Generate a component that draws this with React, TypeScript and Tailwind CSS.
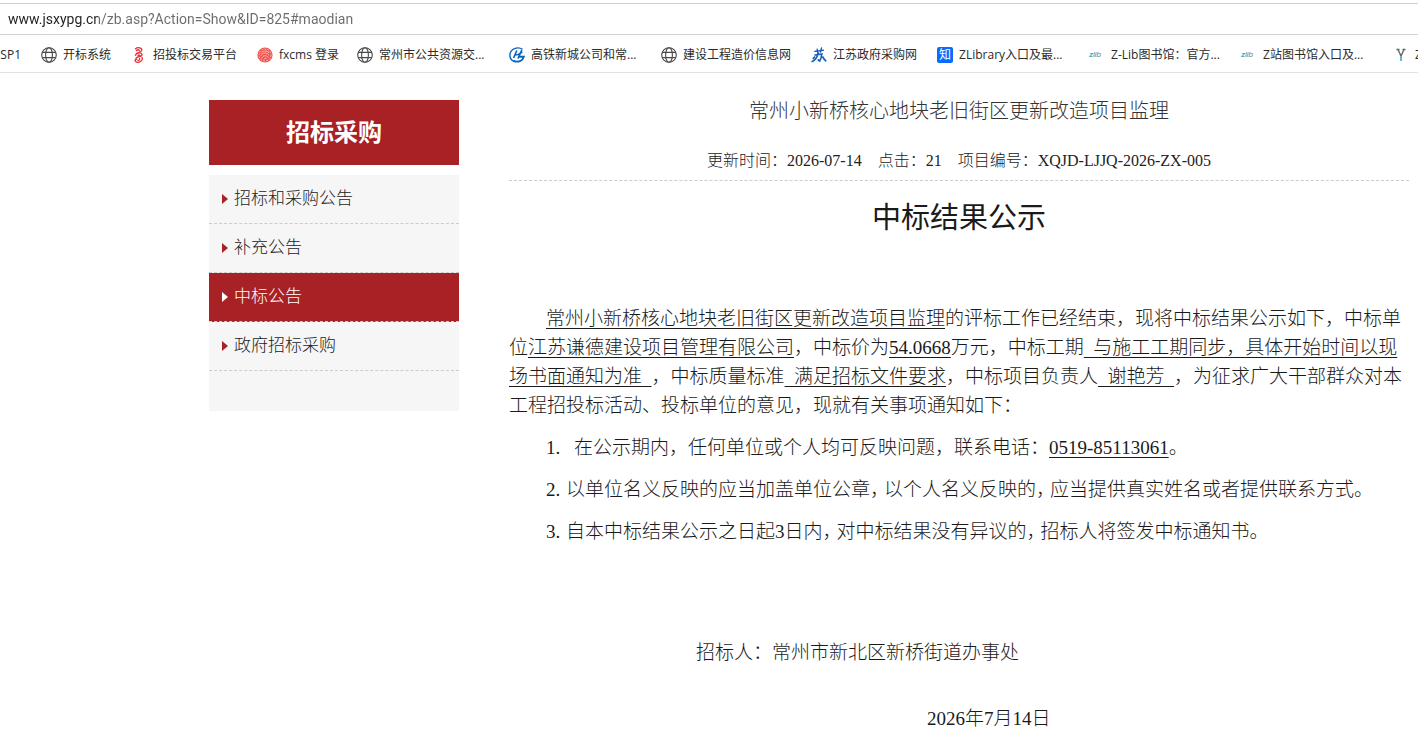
import type { ReactNode } from 'react';

type IconName = 'globe' | 'dragon' | 'seal' | 'rail' | 'su' | 'zhi' | 'zlib' | 'fork';

const bookmarks: { label: string; icon: IconName; width?: string }[] = [
  { label: '开标系统', icon: 'globe' },
  { label: '招投标交易平台', icon: 'dragon' },
  { label: 'fxcms 登录', icon: 'seal', width: 'w-20' },
  { label: '常州市公共资源交...', icon: 'globe', width: 'w-[132px]' },
  { label: '高铁新城公司和常...', icon: 'rail', width: 'w-[132px]' },
  { label: '建设工程造价信息网', icon: 'globe' },
  { label: '江苏政府采购网', icon: 'su' },
  { label: 'ZLibrary入口及最...', icon: 'zhi', width: 'w-[132px]' },
  { label: 'Z-Lib图书馆：官方...', icon: 'zlib', width: 'w-[132px]' },
  { label: 'Z站图书馆入口及...', icon: 'zlib', width: 'w-[132px]' },
  { label: 'Z-Library', icon: 'fork' },
];

const menu = [
  { label: '招标和采购公告' },
  { label: '补充公告' },
  { label: '中标公告', active: true },
  { label: '政府招标采购' },
];

function BookmarkIcon({ name }: { name: IconName }) {
  const svg = 'size-4 shrink-0';
  switch (name) {
    case 'globe':
      return (
        <svg className={svg} viewBox="0 0 16 16" fill="none" stroke="#4a4a4a" strokeWidth="1.1">
          <circle cx="8" cy="8" r="7.3" />
          <ellipse cx="8" cy="8" rx="3.4" ry="7.3" />
          <path d="M1.4 5.4h13.2M1.4 10.6h13.2" />
        </svg>
      );
    case 'dragon':
      return (
        <svg className={svg} viewBox="0 0 16 16" fill="none" stroke="#ee2a35" strokeWidth="1.3" strokeLinecap="round">
          <path d="M4.500 1.800C6.500 0 11 .5 10.800 3.200c-.2 2-3.500 1.800-5.300 3.300M5.500 3.800c.8-1.400 2.800-1.300 2.800-.2" />
          <path d="M4.300 8.300c1.500-2.800 6.500-3.300 6.700-.6.100 2.200-4.500 1.600-6 3.500M7 8.500c1-.8 2-.5 1.800.2" />
          <path d="M11 10.300c1.500 3.500-3.500 6.300-6.500 4.200-1-1.200 0-2.500 1.200-2.200M7 13.300c1.200.2 2-.8 1.600-1.700" />
        </svg>
      );
    case 'seal':
      return (
        <svg className={svg} viewBox="0 0 16 16" fill="none">
          <circle cx="8" cy="8" r="7.6" fill="#f0524d" />
          <g stroke="#fbd0cd" strokeWidth="0.8">
            <circle cx="8" cy="8" r="6" strokeDasharray="2 1" />
            <path d="M4 6.500c1.500-3 6-3.500 8-.5M3.800 9c1-3.500 6.500-4 8.400-.6M5 11.500c0-3 5-4 6.500-.8M7 12.300c.3-1.500 2.200-1.500 2.600 0" />
          </g>
        </svg>
      );
    case 'rail':
      return (
        <svg className={svg} viewBox="0 0 16 16" fill="none" stroke="#0f66bd">
          <path d="M13.500 2.300C8.500-1 1.200 2 .9 8c0 3.200 2 5.700 4.600 6.500" strokeWidth="1.4" />
          <path d="M4.500 14c5 1.600 9 .2 10.300-4.300H9.500" strokeWidth="1.900" />
          <path d="M7.800 3.500 4.600 11M12.800 3.200 9 11.500M5.800 8c2.500.2 4.500-.6 7.500-3.200" strokeWidth="1.700" />
        </svg>
      );
    case 'su':
      return (
        <svg className={svg} viewBox="0 0 16 16" fill="none" stroke="#1d62b8" strokeWidth="1.7" strokeLinecap="round">
          <path d="M3.800 4.400 12.500 3.200M6.200 2.300l.5 3M10.500 1l-1 4" strokeWidth="1.400" />
          <path d="M4 8 10.800 7c-.3 3-1 5.500-2.100 7l-1.500-1M7.300 6C6.300 10 4.500 13 1.200 14.600" />
          <path d="M3.600 10 2.300 11.300M11.800 10c.8 1.500 1.800 2.800 3 3.800" />
        </svg>
      );
    case 'zhi':
      return (
        <span className="flex size-4 shrink-0 items-center justify-center rounded-xs bg-[#0a6cff] text-[12px] leading-4 text-white">
          知
        </span>
      );
    case 'zlib':
      return (
        <span className="flex w-4 shrink-0 items-center font-['Liberation_Sans'] text-[8px] leading-4 text-[#777] italic">
          <span className="font-bold text-[#3aaed2]">z</span>lib
        </span>
      );
    default:
      return (
        <svg className={svg} viewBox="0 0 16 16" fill="none">
          <path d="M3.500 2.500h3M9.500 2.500h3M5 2.500l3 6.500 3-6.500" stroke="#666" strokeWidth="1.400" />
          <path d="M8 9.500V14" stroke="#4db3d3" strokeWidth="1.800" />
        </svg>
      );
  }
}

function U({ children }: { children: ReactNode }) {
  return <span className="underline decoration-1 underline-offset-3 [text-decoration-skip-ink:none]">{children}</span>;
}

// narrow full-width comma used in the numbered notes
function Comma() {
  return <span className="inline-block w-[14px]">，</span>;
}

function BrowserBar() {
  return (
    <header className="overflow-hidden border-b border-[#e2e2e2] pt-[3px] font-['Open_Sans','Noto_Sans_CJK_SC',sans-serif]">
      <div className="border-y border-[#d0d0d0]">
        <input
          aria-label="地址栏"
          defaultValue="www.jsxypg.cn/zb.asp?Action=Show&ID=825#maodian"
          className="block h-[30px] w-full bg-linear-to-r from-[#1f1f1f] from-[98px] to-[#6b6b6b] to-[98px] bg-clip-text px-2 font-['Roboto'] text-sm text-transparent outline-none"
        />
      </div>
      <nav className="-ml-[9px] flex h-[37px] items-center gap-5 pt-0.5 text-[12px] whitespace-nowrap text-[#2b2b2b]">
        <a href="#osp1" className="w-[30px] shrink-0">OSP1</a>
        {bookmarks.map((b, i) => (
          <a
            key={i}
            href="#bookmark"
            className={`flex shrink-0 items-center gap-1.5 ${b.width ?? ''}`}
          >
            <BookmarkIcon name={b.icon} />
            {b.label}
          </a>
        ))}
      </nav>
    </header>
  );
}

function Sidebar() {
  return (
    <aside className="w-[250px] shrink-0">
      <h2 className="bg-[#a82125] pt-0.5 text-center text-2xl leading-[63px] font-bold text-white">招标采购</h2>
      <ul className="mt-2.5 bg-[#f6f6f6] pb-10">
        {menu.map((m) => (
          <li key={m.label} className={`border-b border-dashed border-[#ccc] ${m.active ? 'bg-[#a82125]' : ''}`}>
            <a
              href="#list"
              className={`flex h-12 items-center gap-1.5 pl-[13px] text-[17px] font-light ${m.active ? 'text-white' : 'text-[#222]'}`}
            >
              <svg className={`h-2.5 w-1.5 ${m.active ? 'text-white' : 'text-[#a82125]'}`} viewBox="0 0 6 10" fill="currentColor">
                <path d="M0 0l6 5-6 5z" />
              </svg>
              {m.label}
            </a>
          </li>
        ))}
      </ul>
    </aside>
  );
}

function Article() {
  return (
    <article className="min-w-0 flex-1 pt-px text-[#1a1a1a]">
      <h1 className="text-center text-xl leading-5 font-light text-[#333]">常州小新桥核心地块老旧街区更新改造项目监理</h1>
      <div className="mt-[30px] flex justify-center gap-4 border-b border-dashed border-[#ccc] pb-[9px] text-base leading-5 font-light text-[#222]">
        <span>更新时间：2026-07-14</span>
        <span>点击：21</span>
        <span>项目编号：XQJD-LJJQ-2026-ZX-005</span>
      </div>
      <h2 className="mt-[22px] text-center text-[29px] leading-[30px]">中标结果公示</h2>

      <div className="mt-[71px] text-[19px] leading-[29px] font-light">
        <p className="indent-[37px]">
          <U>常州小新桥核心地块老旧街区更新改造项目监理</U>
          的评标工作已经结束，现将中标结果公示如下，中标单位
          <U>江苏谦德建设项目管理有限公司</U>，中标价为<U>54.0668</U>万元，中标工期
          <U>&nbsp;&nbsp;与施工工期同步，具体开始时间以现场书面通知为准&nbsp;&nbsp;</U>，中标质量标准
          <U>&nbsp;&nbsp;满足招标文件要求</U>，中标项目负责人<U>&nbsp;&nbsp;谢艳芳&nbsp;&nbsp;</U>
          ，为征求广大干部群众对本工程招投标活动、投标单位的意见，现就有关事项通知如下：
        </p>
        <p className="mt-[13px] pl-[37px]">
          <span className="inline-block w-7">1.</span>
          在公示期内，任何单位或个人均可反映问题，联系电话：<U>0519-85113061</U>。
        </p>
        <p className="mt-[13px] pl-[37px]">
          <span className="inline-block w-5">2.</span>
          以单位名义反映的应当加盖单位公章<Comma />以个人名义反映的<Comma />应当提供真实姓名或者提供联系方式。
        </p>
        <p className="mt-[13px] pl-[37px]">
          <span className="inline-block w-5">3.</span>
          自本中标结果公示之日起3日内<Comma />对中标结果没有异议的<Comma />招标人将签发中标通知书。
        </p>
        <p className="mt-[92px] pl-[187px]">招标人：常州市新北区新桥街道办事处</p>
        <p className="mt-[37px] pl-[418px]">2026年7月14日</p>
      </div>
    </article>
  );
}

export default function App() {
  return (
    <div className="min-h-screen overflow-x-hidden bg-white">
      <BrowserBar />
      <main className="flex gap-[50px] pt-[27px] pr-[9px] pl-[209px] font-['Liberation_Serif','Noto_Sans_CJK_SC',serif]">
        <Sidebar />
        <Article />
      </main>
    </div>
  );
}
